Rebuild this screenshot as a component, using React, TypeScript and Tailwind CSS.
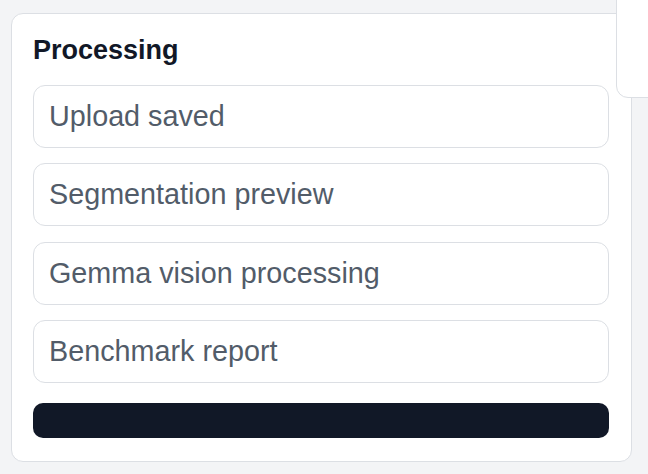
const steps = ['Upload saved', 'Segmentation preview', 'Gemma vision processing', 'Benchmark report'];

function StepRow({ label }: { label: string }) {
  return (
    <div className="h-[63px] flex items-center rounded-[12px] border border-[#dcdfe4] bg-white px-[15px]">
      <span className="text-[28.75px] leading-none text-[#525c69]">{label}</span>
    </div>
  );
}

export default function App() {
  return (
    <div
      className="relative w-[648px] h-[474px] overflow-hidden bg-[#f3f4f6]"
      style={{ fontFamily: '"Liberation Sans", Arial, sans-serif' }}
    >
      <div className="pt-[13px] pl-[11px]">
        <div className="w-[621px] h-[449px] rounded-[12px] border border-[#dcdfe4] bg-white pl-[21px] pr-[22px] pt-[19px]">
          <h2 className="text-[27px] leading-[34px] font-bold text-[#111827]">Processing</h2>
          <div className="mt-[18px] flex flex-col gap-[15.33px]">
            {steps.map((s) => (
              <StepRow key={s} label={s} />
            ))}
          </div>
          <button className="mt-[20px] block w-full h-[35px] rounded-[10px] bg-[#111827]" />
        </div>
      </div>

      {/* neighbouring panel peeking in at the top right */}
      <div className="absolute left-[616px] top-[-20px] w-[60px] h-[118px] rounded-bl-[12px] border border-[#dcdfe4] bg-white" />
    </div>
  );
}
